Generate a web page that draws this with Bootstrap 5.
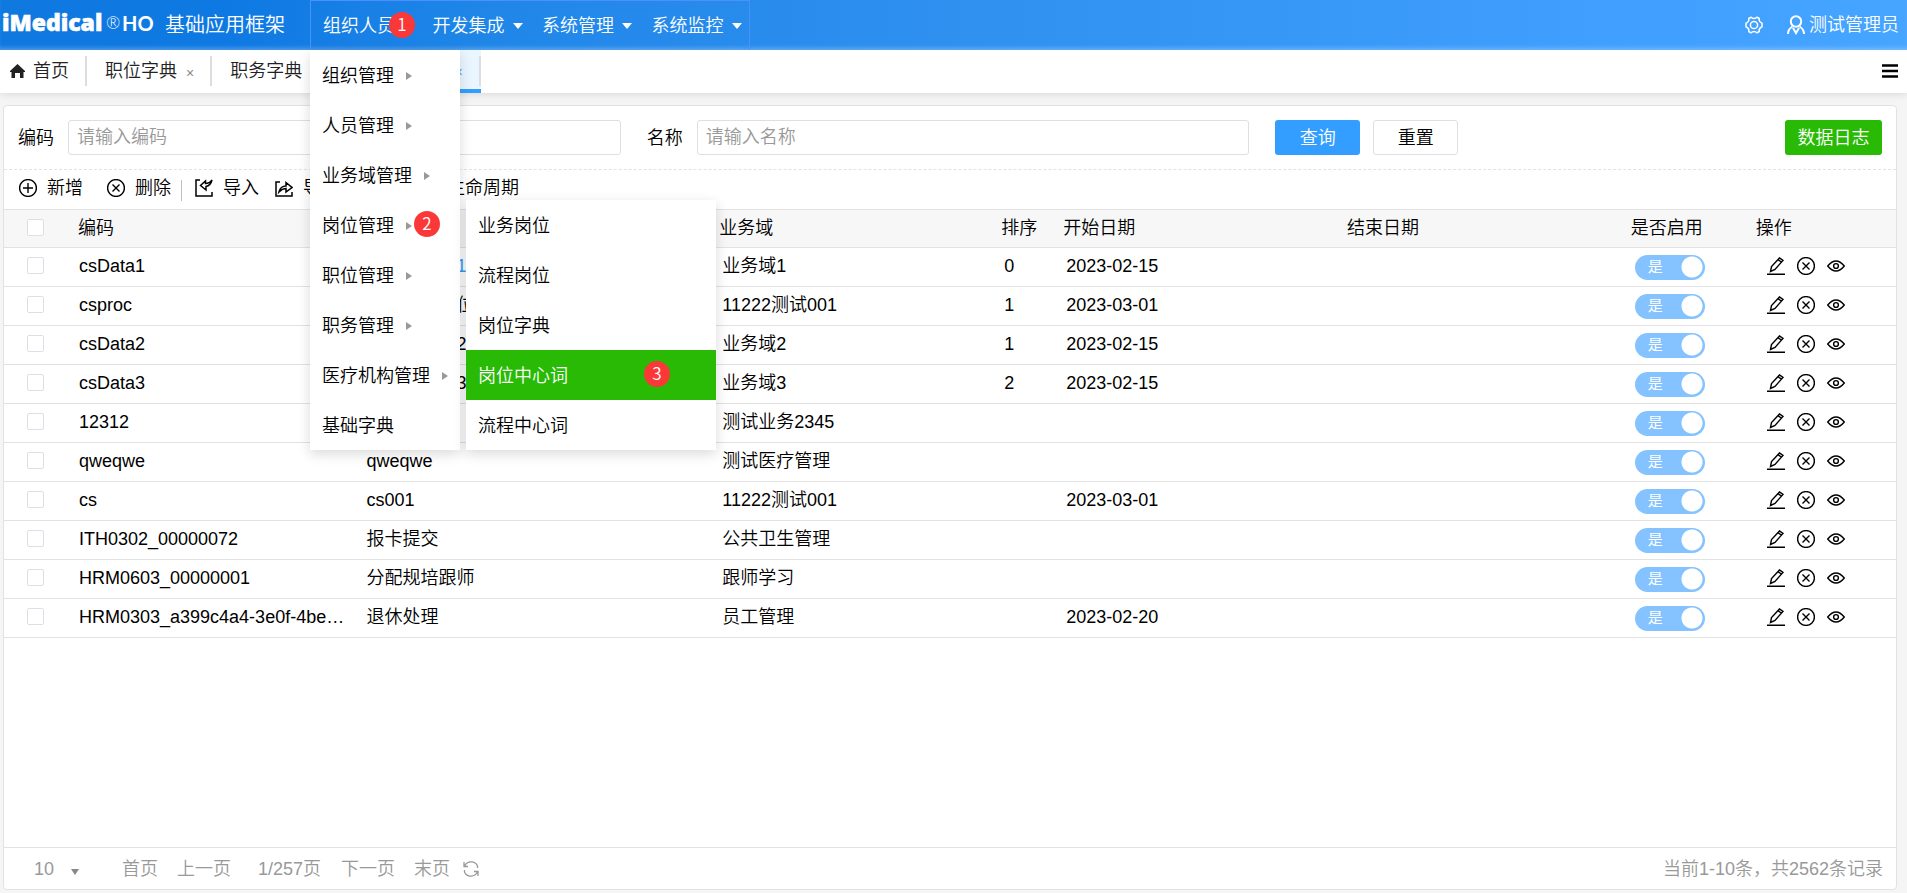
<!DOCTYPE html>
<html lang="zh-CN">
<head>
<meta charset="utf-8">
<meta name="viewport" content="width=device-width, initial-scale=1">
<title>基础应用框架</title>
<link href="https://cdn.jsdelivr.net/npm/bootstrap@5.3.0/dist/css/bootstrap.min.css" rel="stylesheet">
<style>
:root{--line:#e2e2e2;--blue:#339eff;--green:#28ba05;--grey:#999}
body{font:350 18px/24px "Liberation Sans","Noto Sans CJK SC",sans-serif;color:#000;background:#f5f5f5}
a{color:inherit;text-decoration:none}
svg{fill:none;stroke:currentColor;display:block;flex:none}
.topbar{height:50px;padding:0;color:#fff;background:linear-gradient(90deg,#0f79e0 0,#0f79e3 12%,#1f86e8 25%,#2f90f0 50%,#409fff 85%,#46a5ff 100%);box-shadow:inset 0 -4px 4px -2px #ffffff44;z-index:20}
.brand-side{width:310px;padding-left:2px}
.brand-side svg{overflow:visible}
.brand-name{font-size:20px;margin-left:11px}
.mainmenu{border:1px solid #4a90ff;border-bottom:0;height:50px;width:440px}
.mainmenu>li{width:110px}
.mainmenu>li>a{display:flex;align-items:center;height:49px;padding-left:12px;white-space:nowrap}
.caret-down,.caret-right{width:0;height:0;flex:none}
.caret-down{border:5px solid transparent;border-top:6px solid #fff;border-bottom:0;margin-left:8px}
.caret-right{border:4px solid transparent;border-left:6px solid #999;border-right:0;margin-left:12px}
.flyout{display:block;position:absolute;margin:0;padding:0;border:0;border-radius:0;color:#000;background:#fff;font-size:inherit;box-shadow:0 4px 12px #00000026}
.flyout .dropdown-item{display:flex;align-items:center;height:50px;padding:2px 12px 0;color:#000;font-weight:350}
.flyout .dropdown-item.active{background:var(--green);color:#fff}
.menu-one{top:49px;left:-1px;width:150px;min-width:0}
.menu-two{top:0;left:156px;width:250px}
.dot{position:absolute;width:26px;height:26px;border-radius:50%;background:#fb3838;color:#fff;font:350 17px/24px "Noto Sans CJK SC",sans-serif;text-align:center;z-index:5}
.dot-one{left:78px;top:11px}.dot-two{left:104px;top:11px}.dot-three{right:46px;top:11px}
.tabbar{height:43px;background:#fff;box-shadow:0 1px 8px #0000001f;color:#222}
.tabbar li{display:flex;align-items:center;height:43px;position:relative;padding:0 18px 2px}
.tabbar li::after{content:"";position:absolute;right:0;top:6px;height:30px;width:2px;background:#ddd}
.tabbar .home-tab{padding:0 18px 2px 10px}
.tabbar .on{background:#eaf6ff;color:var(--blue);border-bottom:4px solid var(--blue);padding-bottom:0}
.shut{font:14px/16px "Liberation Sans",sans-serif;color:#888;background:none;border:0;padding:4px 0 0;margin-left:9px}
.tabbar .on .shut{color:var(--blue)}
.burger{border:0;background:none;padding:0 0 2px;margin-right:9px;color:#000}
.panel{margin:12px 10px 3px 3px;background:#fff;border:1px solid var(--line);border-radius:4px;flex:1;display:flex;flex-direction:column;min-height:0}
.searchbar{padding:14px;border-bottom:1px dashed var(--line)}
.searchbar .form-control{height:35px;border:1px solid #dcdfe6;border-radius:3px;padding:0 8px;font-size:18px;font-weight:350;flex:18 1 0;width:auto;min-width:0}
.searchbar .form-control::placeholder{color:var(--grey)}
.gapfill{flex:11 1 0}
.searchbar label{margin-right:14px}
.searchbar input+label,.searchbar .btn-find{margin-left:26px}
.searchbar .btn{height:35px;width:85px;padding:0;border-radius:3px;font-size:18px;line-height:24px;font-weight:350}
.btn-find,.btn-find:hover{background:var(--blue);color:#fff}
.searchbar .btn-clear{border:1px solid #dcdfe6;color:#000;margin-left:13px}
.searchbar .btn-log,.btn-log:hover{background:var(--green);color:#fff;width:97px}
.toolbar{height:39px;padding:0 0 4px 15px}
.toolbar button{display:flex;align-items:center;gap:10px;border:0;background:none;padding:0;font-weight:350;color:#000}
.toolbar .vr{margin:10px 13px 4px 10px}
.toolbar .life{margin-left:80px}
.data{table-layout:fixed;width:100%;border-top:1px solid var(--line)}
.data th,.data td{height:39px;padding:0 9px 3px;border-bottom:1px solid var(--line);font-weight:350;white-space:nowrap;overflow:hidden;text-overflow:ellipsis}
.data th{height:38px;background:#f7f7f7;padding:0 8px 2px}
.data th:nth-child(n+4){padding-left:6px}
.data td:first-child,.data th:first-child{padding-left:23px}
.data .form-check-input{display:block;width:17px;height:17px;margin:0;border:1px solid #dcdfe6;border-radius:2px}
.c-check{width:66px}.c-code{width:15.2%}.c-name{width:18.8%}.c-area{width:14.9%}.c-order{width:62px}.c-date{width:15%}.c-on{width:125px}
.toggle{position:relative;display:block;width:70px;height:25px;margin:4px 0 0 1px}
.toggle input{appearance:none;display:block;width:70px;height:25px;margin:0;border-radius:13px;background:radial-gradient(circle at 57px 12px,#fff 10px,transparent 11px) #84c3ff}
.toggle span{position:absolute;left:13px;top:0;font-size:15px;line-height:24px;font-weight:400;color:#fff}
.ops{display:flex;gap:12px;padding-left:8px}
.ops button{border:0;background:none;padding:0;color:#000}
.picked{color:var(--blue)}
.pager{height:42px;margin-top:auto;border-top:1px solid var(--line);color:var(--grey);padding:0 13px 0 30px}
.pager a{margin-right:19px}
.pager span{margin:0 20px 0 8px}
.pager .total{margin:0 0 0 auto}
.pager select{appearance:none;border:0;background:none;color:inherit;width:37px;font-weight:350;padding:0}
.pager .caret-down{border-top-color:#888;margin:6px 43px 0 0;border-width:6px 4px 0}
.pager .last-page{margin-right:13px}
</style>
</head>
<body class="d-flex flex-column min-vh-100">
<svg width="0" height="0" class="position-absolute" aria-hidden="true">
<symbol id="i-x" viewBox="0 0 18 18"><circle cx="9" cy="9" r="8.400"/><path d="M5.500 5.500l7 7M12.500 5.500l-7 7"/></symbol>
<symbol id="i-plus" viewBox="0 0 18 18"><circle cx="9" cy="9" r="8.400"/><path d="M4 9h10M9 4v10"/></symbol>
<symbol id="i-pen" viewBox="0 0 18 18"><path d="M0 17.300h18M3.500 14.500l1-5L12.500.9l3.500 2.500-8 9-4.500 2.100zM11 2.600l3.500 2.700"/></symbol>
<symbol id="i-eye" viewBox="0 0 18 18"><path d="M.7 9Q9-1 17.300 9 9 19 .7 9z"/><circle cx="9" cy="9" r="2.400"/></symbol>
</svg>
<header class="topbar navbar navbar-expand flex-nowrap position-relative">
  <div class="brand-side d-flex align-items-center align-self-center text-nowrap">
    <svg width="152" height="26" viewBox="0 0 152 26" role="img" aria-label="iMedical HO">
      <g fill="#fff" stroke="#fff">
        <text x="0" y="19" font-size="23" font-weight="800" stroke-width=".6" font-family="Open Sans, sans-serif">iMedical</text>
        <text x="104" y="17" font-size="17" font-weight="300" stroke="none" font-family="Lato, sans-serif">®</text>
        <text x="120" y="19" font-size="20" font-weight="700" stroke="none" font-family="Lato, sans-serif">HO</text>
      </g>
    </svg>
    <span class="brand-name">基础应用框架</span>
  </div>
  <ul class="mainmenu navbar-nav align-self-start">
    <li class="nav-item dropdown"><a href="#">组织人员</a><span class="dot dot-one">1</span>
      <ul class="flyout menu-one dropdown-menu">
        <li><a class="dropdown-item" href="#">组织管理<i class="caret-right"></i></a></li>
        <li><a class="dropdown-item" href="#">人员管理<i class="caret-right"></i></a></li>
        <li><a class="dropdown-item" href="#">业务域管理<i class="caret-right"></i></a></li>
        <li class="position-relative"><a class="dropdown-item" href="#">岗位管理<i class="caret-right"></i></a><span class="dot dot-two">2</span>
          <ul class="flyout menu-two dropdown-menu">
            <li><a class="dropdown-item" href="#">业务岗位</a></li>
            <li><a class="dropdown-item" href="#">流程岗位</a></li>
            <li><a class="dropdown-item" href="#">岗位字典</a></li>
            <li class="position-relative"><a class="dropdown-item active" href="#">岗位中心词</a><span class="dot dot-three">3</span></li>
            <li><a class="dropdown-item" href="#">流程中心词</a></li>
          </ul>
        </li>
        <li><a class="dropdown-item" href="#">职位管理<i class="caret-right"></i></a></li>
        <li><a class="dropdown-item" href="#">职务管理<i class="caret-right"></i></a></li>
        <li><a class="dropdown-item" href="#">医疗机构管理<i class="caret-right"></i></a></li>
        <li><a class="dropdown-item" href="#">基础字典</a></li>
      </ul>
    </li>
    <li class="nav-item"><a href="#">开发集成<i class="caret-down"></i></a></li>
    <li class="nav-item"><a href="#">系统管理<i class="caret-down"></i></a></li>
    <li class="nav-item"><a href="#">系统监控<i class="caret-down"></i></a></li>
  </ul>
  <a href="#" class="ms-auto" aria-label="设置"><svg width="18" height="18" viewBox="0 0 18 18" stroke-width="1.500"><path d="M6 1.200Q9 3.800 12 1.200L14.200 2.500Q13.600 5.800 17 7.300V10.700Q13.600 12.200 14.200 15.500L12 16.800Q9 14.200 6 16.800L3.800 15.500Q4.400 12.200 1 10.700V7.300Q4.400 5.800 3.800 2.500z"/><circle cx="9" cy="9" r="3.600"/></svg></a>
  <a href="#" class="d-flex align-items-center ms-4 me-2 gap-1 text-nowrap"><svg width="18" height="20" viewBox="0 0 18 20" stroke-width="2"><circle cx="9" cy="6.500" r="5.200"/><path d="M1 19c0-4 2-6 4.500-7.500M17 19c0-4-2-6-4.500-7.500M6 13l3 5 3-5"/></svg>测试管理员</a>
</header>
<nav class="tabbar d-flex justify-content-between position-relative">
  <ul class="list-unstyled d-flex m-0 text-nowrap">
    <li class="home-tab"><svg width="15" height="14" viewBox="0 0 15 14" class="me-2"><path d="M7.500 0L0 7v1h1.500v6H5V9h5v5h3.500V8H15V7z" fill="#222" stroke="none"/></svg><a href="#">首页</a></li>
    <li><a href="#">职位字典</a><button class="shut" aria-label="关闭">×</button></li>
    <li><a href="#">职务字典</a><button class="shut" aria-label="关闭">×</button></li>
    <li class="on"><a href="#">岗位中心词</a><button class="shut" aria-label="关闭">×</button></li>
  </ul>
  <button class="burger" aria-label="菜单"><svg width="16" height="14" viewBox="0 0 16 14" stroke-width="2.500"><path d="M0 1.500h16M0 7h16M0 12.500h16"/></svg></button>
</nav>
<main class="panel">
  <form class="searchbar d-flex align-items-center text-nowrap">
    <label for="code">编码</label><input id="code" class="form-control" placeholder="请输入编码">
    <label for="name">名称</label><input id="name" class="form-control" placeholder="请输入名称">
    <button type="button" class="btn btn-find">查询</button>
    <button type="button" class="btn btn-clear">重置</button>
    <span class="gapfill"></span>
    <button type="button" class="btn btn-log">数据日志</button>
  </form>
  <div class="toolbar d-flex align-items-center text-nowrap">
    <button><svg width="18" height="18" stroke-width="1.400"><use href="#i-plus"/></svg>新增</button>
    <button class="ms-4"><svg width="18" height="18" stroke-width="1.400"><use href="#i-x"/></svg>删除</button>
    <span class="vr"></span>
    <button><svg width="18" height="18" viewBox="0 0 18 18" stroke-width="1.500"><path d="M5 1H1v16h16v-4M17 1c-1 4-3 6-6 6.500V11L5.500 6.500l5-4.500v2.500c3 0 5-1.500 6.500-3.500z"/></svg>导入</button>
    <button class="ms-3"><svg width="18" height="18" viewBox="0 0 18 18" stroke-width="1.500"><path d="M5 3H1v14h16v-4M4 13c1-4 3-6 7-6V3.500l6 5-6 4.500v-3.500c-3 0-5 1.500-7 3.500z"/></svg>导出</button>
    <button class="life"><svg width="18" height="18" stroke-width="1.400"><use href="#i-eye"/></svg>生命周期</button>
  </div>
  <table class="data">
    <colgroup><col class="c-check"><col class="c-code"><col class="c-name"><col class="c-area"><col class="c-order"><col class="c-date"><col class="c-date"><col class="c-on"><col></colgroup>
    <thead><tr><th><input class="form-check-input" type="checkbox" aria-label="全选"></th><th>编码</th><th>名称</th><th>业务域</th><th>排序</th><th>开始日期</th><th>结束日期</th><th>是否启用</th><th>操作</th></tr></thead>
    <tbody id="rows"></tbody>
  </table>
  <div class="pager d-flex align-items-center text-nowrap">
    <select aria-label="每页条数"><option>10</option></select><i class="caret-down"></i>
    <a href="#">首页</a><a href="#">上一页</a><span>1/257页</span><a href="#">下一页</a><a href="#" class="last-page">末页</a>
    <a href="#" aria-label="刷新"><svg width="16" height="16" viewBox="0 0 16 16" stroke-width="1.300"><path d="M1 1v4.500h4M1.500 5C4 0 12-1 14.500 5v2M15 15v-4.500h-4M14.500 11C12 16 4 17 1.500 11V9"/></svg></a>
    <span class="total">当前1-10条，共2562条记录</span>
  </div>
</main>
<script src="https://cdn.jsdelivr.net/npm/bootstrap@5.3.0/dist/js/bootstrap.bundle.min.js"></script>
<script>
const rows=[
["csData1",'<a class="picked" href="#">测试业务岗1</a>',"业务域1","0","2023-02-15"],
["csproc","测试流程岗位","11222测试001","1","2023-03-01"],
["csData2","测试业务岗2","业务域2","1","2023-02-15"],
["csData3","测试业务岗3","业务域3","2","2023-02-15"],
["12312","12312","测试业务2345","",""],
["qweqwe","qweqwe","测试医疗管理","",""],
["cs","cs001","11222测试001","","2023-03-01"],
["ITH0302_00000072","报卡提交","公共卫生管理","",""],
["HRM0603_00000001","分配规培跟师","跟师学习","",""],
["HRM0303_a399c4a4-3e0f-4be2-9c51","退休处理","员工管理","","2023-02-20"]];
const op=(id,label)=>`<button aria-label="${label}"><svg width="18" height="18" stroke-width="1.400"><use href="#${id}"/></svg></button>`;
document.getElementById("rows").innerHTML=rows.map(r=>`<tr><td><input class="form-check-input" type="checkbox" aria-label="选择 ${r[0]}"></td>${r.map(c=>`<td>${c}</td>`).join("")}<td></td><td><label class="toggle"><input type="checkbox" role="switch" checked><span>是</span></label></td><td><div class="ops">${op("i-pen","编辑")}${op("i-x","删除")}${op("i-eye","查看")}</div></td></tr>`).join("");
</script>
</body>
</html>
